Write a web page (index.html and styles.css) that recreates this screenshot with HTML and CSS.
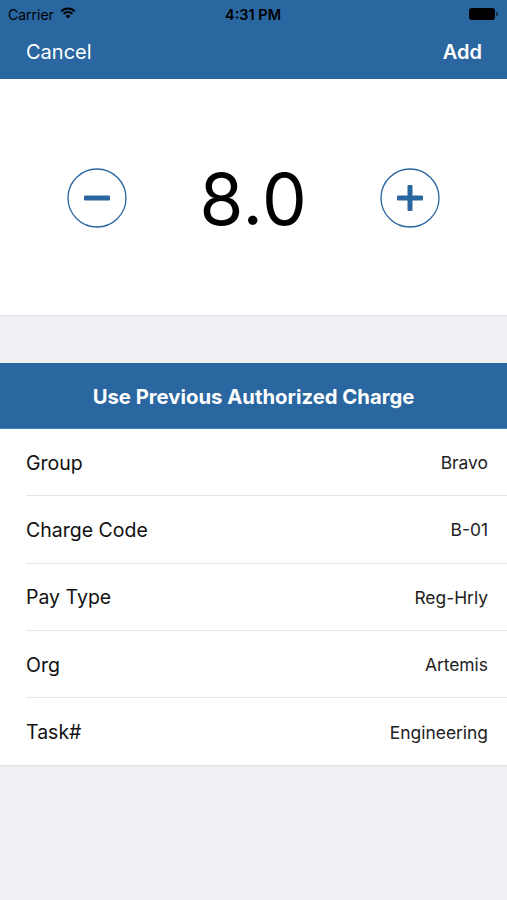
FILE: index.html
```html
<!DOCTYPE html>
<html lang="en">
<head>
<meta charset="UTF-8" />
<meta name="viewport" content="width=device-width, initial-scale=1" />
<title>Add Hours</title>
<link rel="stylesheet" href="styles.css">
</head>
<body>
  <header class="header">
    <div class="status-bar">
      <div class="status-left">
        <span>Carrier</span>
        <svg class="wifi" width="16" height="12" viewBox="0 0 16 12">
          <path d="M8 11.5 L5.6 8.9 A3.4 3.4 0 0 1 10.4 8.9 Z" fill="#000"/>
          <path d="M3.6 6.8 A6.3 6.3 0 0 1 12.4 6.8" stroke="#000" stroke-width="1.9" fill="none"/>
          <path d="M1.2 4.3 A9.6 9.6 0 0 1 14.8 4.3" stroke="#000" stroke-width="1.9" fill="none"/>
        </svg>
      </div>
      <div class="status-time">4:31 PM</div>
      <div class="status-right">
        <span class="battery"></span>
        <span class="battery-tip"></span>
      </div>
    </div>
    <nav class="nav-bar">
      <span class="nav-cancel">Cancel</span>
      <span class="nav-add">Add</span>
    </nav>
  </header>

  <section class="stepper">
    <button class="step-btn" aria-label="Decrease">
      <svg width="60" height="60" viewBox="0 0 60 60">
        <circle cx="30" cy="30" r="29" fill="none" stroke="#2a66a0" stroke-width="1.3"/>
        <rect x="17" y="27.5" width="26" height="5" rx="1" fill="#2a66a0"/>
      </svg>
    </button>
    <div class="step-value">8.0</div>
    <button class="step-btn" aria-label="Increase">
      <svg width="60" height="60" viewBox="0 0 60 60">
        <circle cx="30" cy="30" r="29" fill="none" stroke="#2a66a0" stroke-width="1.3"/>
        <rect x="17" y="27.5" width="26" height="5" rx="1" fill="#2a66a0"/>
        <rect x="27.5" y="17" width="5" height="26" rx="1" fill="#2a66a0"/>
      </svg>
    </button>
  </section>

  <div class="spacer"></div>

  <button class="prev-charge">Use Previous Authorized Charge</button>

  <ul class="details">
    <li class="row"><span class="label">Group</span><span class="value">Bravo</span></li>
    <li class="row"><span class="label">Charge Code</span><span class="value">B-01</span></li>
    <li class="row"><span class="label">Pay Type</span><span class="value">Reg-Hrly</span></li>
    <li class="row"><span class="label">Org</span><span class="value">Artemis</span></li>
    <li class="row"><span class="label">Task#</span><span class="value">Engineering</span></li>
  </ul>
</body>
</html>
```

FILE: styles.css
```css
* {
  box-sizing: border-box;
}

body {
  margin: 0;
  padding: 0;
  font-family: Inter, 'Liberation Sans', Arial, sans-serif;
  background: #efeff4;
  min-height: 100vh;
}

.header {
  background: #2a66a0;
  height: 79px;
}

.status-bar {
  height: 28px;
  display: flex;
  align-items: center;
  justify-content: space-between;
  padding: 0 9px 0 8px;
  color: #000;
  font-size: 14px;
}

.status-left {
  display: flex;
  align-items: center;
  gap: 6px;
  width: 100px;
}

.wifi {
  margin-top: -2px;
}

.status-time {
  font-weight: 600;
  font-size: 14.5px;
}

.status-right {
  width: 100px;
  display: flex;
  justify-content: flex-end;
  align-items: center;
}

.battery {
  width: 26px;
  height: 12px;
  border-radius: 3px;
  background: #000;
  display: inline-block;
}

.battery-tip {
  width: 2px;
  height: 4px;
  background: rgba(0,0,0,0.5);
  border-radius: 0 1px 1px 0;
  margin-left: 1px;
}

.nav-bar {
  height: 51px;
  display: flex;
  align-items: center;
  justify-content: space-between;
  padding: 0 25px 4px 26px;
  color: #fff;
  font-size: 20px;
}

.nav-add {
  font-weight: 600;
}

.stepper {
  background: #fff;
  height: 237px;
  display: flex;
  align-items: center;
  justify-content: space-between;
  padding: 2px 67px 0 67px;
  border-bottom: 1px solid #e2e2e6;
}

.step-btn {
  background: none;
  border: none;
  padding: 0;
  width: 60px;
  height: 60px;
  display: block;
}

.step-value {
  font-size: 71px;
  color: #000;
  font-weight: 400;
  letter-spacing: 0.8px;
  margin-top: 2px;
}

.spacer {
  height: 47px;
}

.prev-charge {
  display: block;
  width: 100%;
  height: 66px;
  background: #2a66a0;
  color: #fff;
  border: none;
  border-bottom: 1px solid #4a7fb2;
  font-family: inherit;
  font-size: 20.3px;
  font-weight: 700;
  padding: 2px 0 0;
}

.details {
  list-style: none;
  margin: 0;
  padding: 0 0 0 26px;
  background: #fff;
  border-bottom: 1px solid #e2e2e6;
}

.row {
  height: 67.3px;
  display: flex;
  align-items: center;
  justify-content: space-between;
  padding: 1px 19px 0 0;
  border-bottom: 1px solid #e6e6ea;
}

.row:last-child {
  border-bottom: none;
}

.label {
  font-size: 19.5px;
  color: #111;
}

.value {
  font-size: 17.4px;
  color: #222;
}
```
